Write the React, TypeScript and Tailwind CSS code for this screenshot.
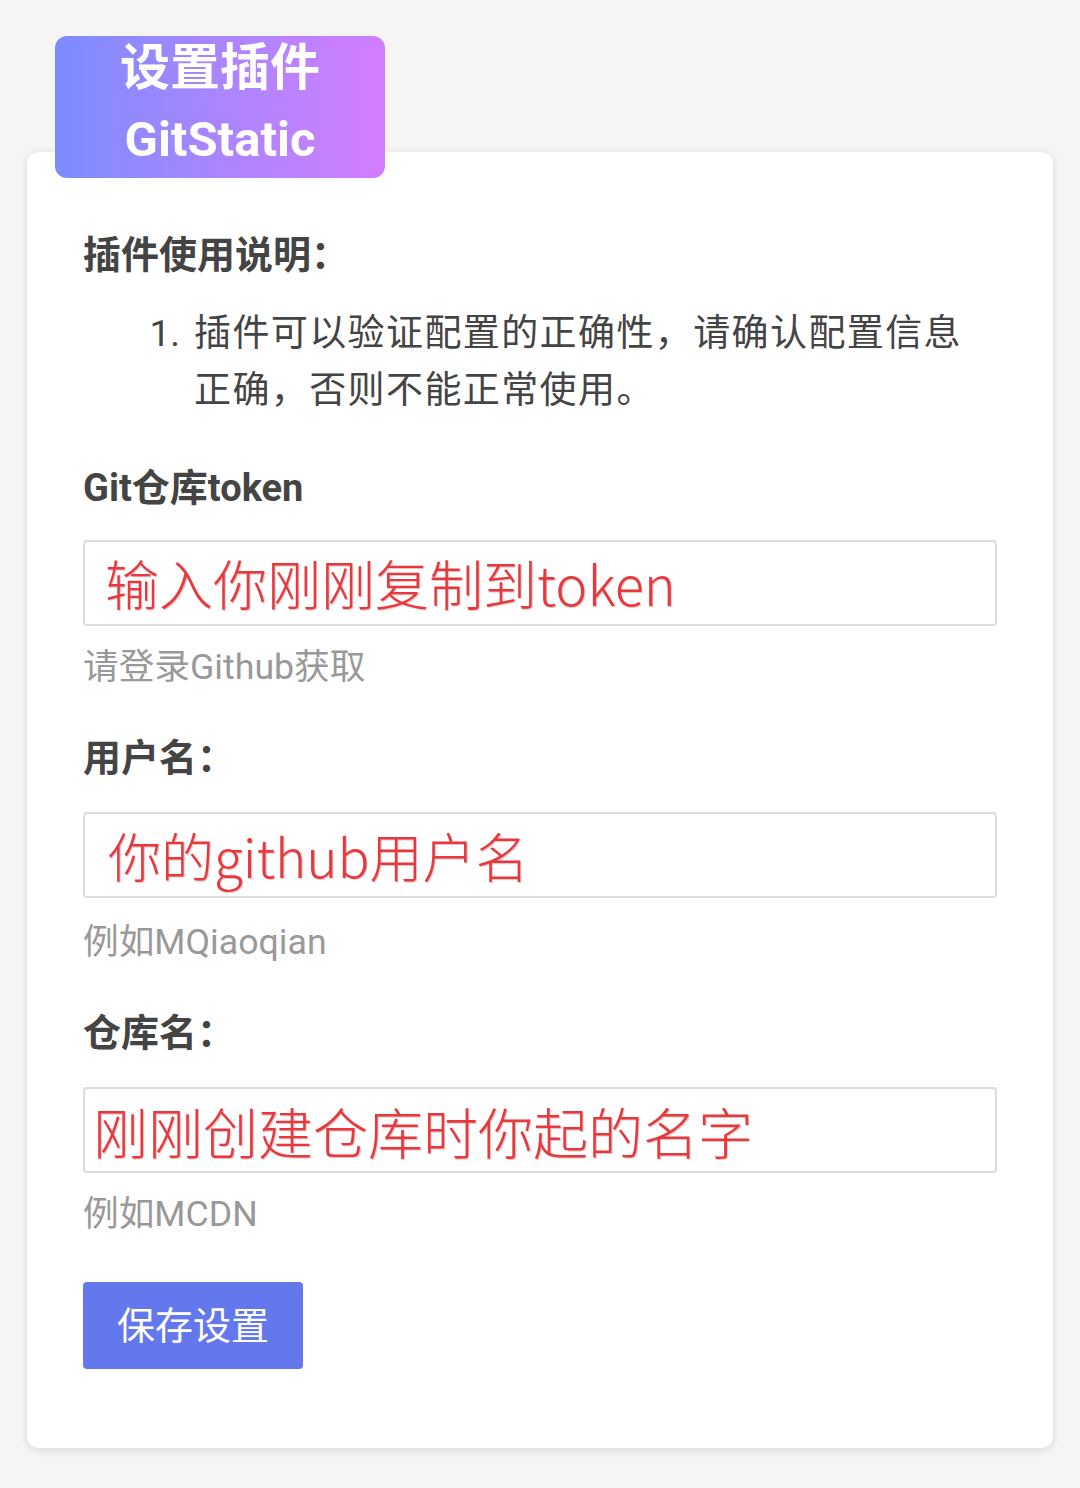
import React from "react";

const sans = { fontFamily: 'Roboto, "Noto Sans CJK SC", sans-serif' };
const cjk = { fontFamily: '"Noto Sans CJK SC", sans-serif' };

function Field({
  label,
  note,
  hint,
  noteClass,
  labelMt,
  inputMt,
  hintMt,
}: {
  label: string;
  note: string;
  hint: string;
  noteClass: string;
  labelMt: string;
  inputMt: string;
  hintMt: string;
}) {
  return (
    <div>
      <div className={`${labelMt} text-[38px] leading-[50px] font-bold text-[#444]`}>{label}</div>
      <div
        className={`${inputMt} h-[86px] w-full rounded-[4px] border-2 border-[#dcdcdc] bg-white flex items-center`}
      >
        <span
          className={`${noteClass} leading-none font-light text-[#e8383d] whitespace-nowrap [text-shadow:1px_1px_1px_rgba(120,0,0,0.25)]`}
          style={cjk}
        >
          {note}
        </span>
      </div>
      <div className={`${hintMt} text-[35.7px] leading-[48px] text-[#999]`}>{hint}</div>
    </div>
  );
}

export default function App() {
  return (
    <div className="min-h-[1488px] w-full bg-[#f5f5f5] pt-[36px] px-[27px]" style={sans}>
      <div className="relative z-10 ml-[28px] w-[330px] h-[142px] rounded-[12px] bg-gradient-to-r from-[#7b8bff] to-[#d27dff] flex flex-col items-center justify-center text-white font-bold">
        <div className="text-[50px] leading-[64px] -mt-[6px]">设置插件</div>
        <div className="text-[49px] leading-[64px] mt-[8px]">GitStatic</div>
      </div>
      <div className="-mt-[26px] w-[1026px] rounded-[12px] bg-white shadow-[0_2px_8px_rgba(0,0,0,0.12)] pl-[56px] pr-[56px] pt-[78px] pb-[79px]">
        <div className="text-[38px] leading-[50px] font-bold text-[#444]">插件使用说明：</div>
        <div className="mt-[25px] flex text-[37px] leading-[57px] text-[#444]">
          <span className="w-[111px] text-right pr-[14px]">1.</span>
          <span className="whitespace-nowrap tracking-[1.4px]">
            插件可以验证配置的正确性，请确认配置信息
            <br />
            正确，否则不能正常使用。
          </span>
        </div>
        <Field
          label="Git仓库token"
          note="输入你刚刚复制到token"
          hint="请登录Github获取"
          noteClass="ml-[20px] text-[54px]"
          labelMt="mt-[44px]"
          inputMt="mt-[27px]"
          hintMt="mt-[17px]"
        />
        <Field
          label="用户名："
          note="你的github用户名"
          hint="例如MQiaoqian"
          noteClass="ml-[23px] text-[53px]"
          labelMt="mt-[42px]"
          inputMt="mt-[29px]"
          hintMt="mt-[20px]"
        />
        <Field
          label="仓库名："
          note="刚刚创建仓库时你起的名字"
          hint="例如MCDN"
          noteClass="ml-[8px] text-[55px]"
          labelMt="mt-[42px]"
          inputMt="mt-[29px]"
          hintMt="mt-[17px]"
        />
        <button className="mt-[44px] h-[87px] w-[220px] rounded-[4px] bg-[#6478ee] text-white text-[38px] leading-none">
          保存设置
        </button>
      </div>
    </div>
  );
}
